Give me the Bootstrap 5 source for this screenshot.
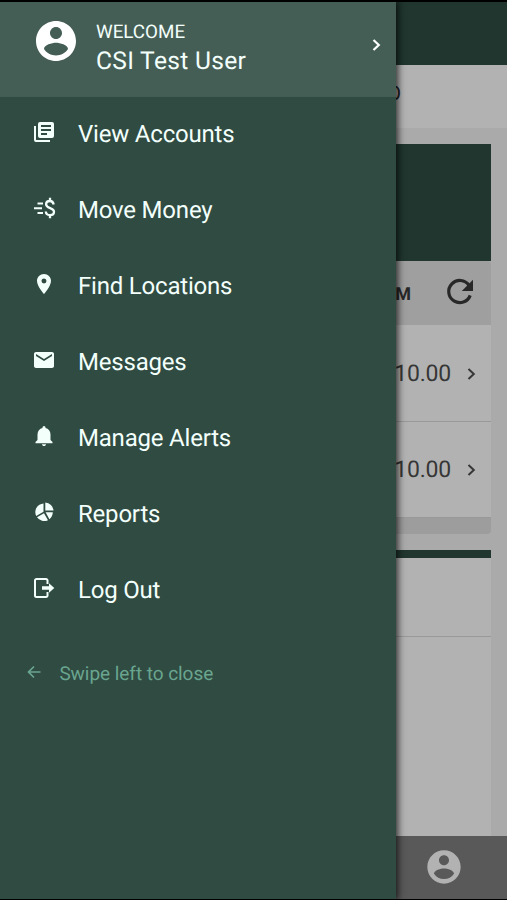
<!DOCTYPE html>
<html lang="en">
<head>
<meta charset="utf-8">
<meta name="viewport" content="width=device-width, initial-scale=1">
<title>Menu</title>
<link href="https://cdn.jsdelivr.net/npm/bootstrap@5.3.0/dist/css/bootstrap.min.css" rel="stylesheet">
<style>
body{font-family:Roboto,"Liberation Sans",sans-serif;background:#000;line-height:1;text-rendering:geometricPrecision}
.app{height:900px;padding:2px 0 1px;background:#000}
.page-area{background:#aaa}
.topbar{height:63px;background:#20362f}
.tabstrip{height:63px;background:#b2b2b2;padding:0 106px 7px 0;font-size:20px;color:#222}
.panel-head{height:117px;background:#20362f}
.panel-bar{height:64px;background:#9f9f9f;color:#282828;padding-right:14px;border-radius:0 4px 0 0}
.panel-bar b{font-size:18px;margin-right:34px;padding-top:3px}
.panel-bar svg{margin-top:-2px}
.amount-row{height:96px;background:#b2b2b2;color:#363636;font-size:23px;letter-spacing:-.2px;border-bottom:1px solid #999;padding:0 15px 0 0}
.amount-row svg{margin-left:16px}
.panel-foot{height:16px;background:#9d9d9d;border-radius:0 0 4px 4px}
.stack{padding-top:1px;background:#b2b2b2}
.accent{height:8px;background:#20362f;margin-top:16px}
.blank-row{height:79px;background:#b2b2b2;border-bottom:1px solid #999}
.blank-fill{background:#b2b2b2}
.bottombar{height:63px;background:#595959;padding:0 43px 1px 0}
.drawer{top:2px;left:0;width:396.4px;height:897px;background:#2f4b42;color:#f3fffb;box-shadow:1px 0 7px 1px rgba(0,0,0,.75)}
.profile{height:95px;background:#455e55;padding:19px 11.400px 0 32px}
.avatar{margin-top:-4px}
.who{margin-left:16px}
.hello{font-size:18.8px;line-height:22px}
.name{font-size:24.6px;line-height:28px;padding-top:5px;letter-spacing:.3px}
.entry{height:76px;padding:0 0 2px 32.4px;font-size:24px;letter-spacing:-.2px;color:#f3fffb}
.entry svg{margin-right:21.6px;margin-top:-4px}
.swipe{padding:35px 0 0 26.4px;color:#6aa58f;font-size:19px;letter-spacing:-.05px}
.swipe svg{margin-right:17px;margin-top:-3px}
</style>
</head>
<body>
<div class="app position-relative overflow-hidden">
  <div class="page-area d-flex flex-column h-100">
    <header class="topbar"></header>
    <div class="tabstrip d-flex align-items-center justify-content-end">O</div>
    <main class="flex-grow-1 d-flex flex-column px-3 pt-3">
      <div class="panel-head"></div>
      <div class="panel-bar d-flex align-items-center justify-content-end"><b>M</b>
        <svg width="32" height="32" viewBox="0 0 24 24" fill="none"><path d="M18.900 14.500A8.300 8.300 0 1 1 18 7" stroke="#282828" stroke-width="2.400"/><path d="M21 2.800v8.400h-8.400z" fill="#282828"/></svg>
      </div>
      <div class="stack">
      <div class="amount-row d-flex align-items-center justify-content-end">$10.00
        <svg width="9" height="14" viewBox="0 0 9 14" fill="none" stroke="#363636" stroke-width="2"><path d="M1.500 2 6.800 7 1.500 12"/></svg></div>
      <div class="amount-row d-flex align-items-center justify-content-end">$10.00
        <svg width="9" height="14" viewBox="0 0 9 14" fill="none" stroke="#363636" stroke-width="2"><path d="M1.500 2 6.800 7 1.500 12"/></svg></div>
      </div>
      <div class="panel-foot"></div>
      <div class="accent"></div>
      <div class="blank-row"></div>
      <div class="blank-fill flex-grow-1"></div>
    </main>
    <footer class="bottombar d-flex align-items-center justify-content-end">
      <svg width="40" height="40" viewBox="0 0 24 24" fill="#b2b2b2"><path d="M12 2C6.480 2 2 6.480 2 12s4.480 10 10 10 10-4.480 10-10S17.520 2 12 2zm0 3c1.660 0 3 1.340 3 3s-1.340 3-3 3-3-1.340-3-3 1.340-3 3-3zm0 14.200c-2.500 0-4.710-1.280-6-3.220.030-1.990 4-3.080 6-3.080 1.990 0 5.970 1.090 6 3.080-1.290 1.940-3.500 3.220-6 3.220z"/></svg>
    </footer>
  </div>

  <nav class="drawer position-absolute">
    <div class="profile d-flex align-items-start">
      <svg class="avatar" width="48" height="48" viewBox="0 0 24 24" fill="#fff"><path d="M12 2C6.480 2 2 6.480 2 12s4.480 10 10 10 10-4.480 10-10S17.520 2 12 2zm0 3c1.660 0 3 1.340 3 3s-1.340 3-3 3-3-1.340-3-3 1.340-3 3-3zm0 14.200c-2.500 0-4.710-1.280-6-3.220.030-1.990 4-3.080 6-3.080 1.990 0 5.970 1.090 6 3.080-1.290 1.940-3.500 3.220-6 3.220z"/></svg>
      <div class="who flex-grow-1"><div class="hello">WELCOME</div><div class="name">CSI Test User</div></div>
      <svg class="me-1 mt-3" width="9" height="16" viewBox="0 0 9 16" fill="none" stroke="#fff" stroke-width="2.200"><path d="M1.500 3 6.800 8 1.500 13"/></svg>
    </div>
    <a class="entry d-flex align-items-center text-decoration-none" href="#"><svg width="24" height="24" viewBox="0 0 24 24" fill="currentColor"><path d="M4 6H2v14a2 2 0 0 0 2 2h14v-2H4z"/><path fill-rule="evenodd" d="M8 2h12a2 2 0 0 1 2 2v12a2 2 0 0 1-2 2H8a2 2 0 0 1-2-2V4a2 2 0 0 1 2-2zm1 3v2h10V5zm0 4v2h10V9zm0 4v2h6v-2z"/></svg>View Accounts</a>
    <a class="entry d-flex align-items-center text-decoration-none" href="#"><svg width="24" height="24" viewBox="0 0 24 24" fill="none" stroke="currentColor" stroke-width="2"><path d="M5.500 7.500h5.500M2 12.200h8M5.500 17h5.500"/><path stroke-width="2.300" d="M21.700 8.500C21.200 6.300 19.900 5 18 5c-2.300 0-3.900 1.300-3.900 3.300 0 4.600 7.900 2.900 7.900 7.400 0 2.200-1.700 3.400-4 3.400-2.400 0-4-1.200-4.200-3.600M18 1.700v3.300M18 19v3.300"/></svg>Move Money</a>
    <a class="entry d-flex align-items-center text-decoration-none" href="#"><svg width="24" height="24" viewBox="0 0 24 24" fill="currentColor"><path d="M12 2C8.130 2 5 5.130 5 9c0 5.250 7 13 7 13s7-7.750 7-13c0-3.870-3.130-7-7-7zm0 9.500a2.500 2.500 0 0 1 0-5 2.500 2.500 0 0 1 0 5z"/></svg>Find Locations</a>
    <a class="entry d-flex align-items-center text-decoration-none" href="#"><svg width="24" height="24" viewBox="0 0 24 24" fill="currentColor"><path d="M20 4H4c-1.100 0-1.990.900-1.990 2L2 18c0 1.100.900 2 2 2h16c1.100 0 2-.900 2-2V6c0-1.100-.900-2-2-2zm0 4-8 5-8-5V6l8 5 8-5z"/></svg>Messages</a>
    <a class="entry d-flex align-items-center text-decoration-none" href="#"><svg width="24" height="24" viewBox="0 0 24 24" fill="currentColor"><path d="M12 22c1.100 0 2-.700 2-1.800h-4c0 1.100.900 1.800 2 1.800zM18.500 16v-5.500c0-3.100-2-5.800-5-6.500v-.500a1.500 1.500 0 0 0-3 0V4c-3 .700-5 3.400-5 6.500V16l-2 2v1.200h17V18z"/></svg>Manage Alerts</a>
    <a class="entry d-flex align-items-center text-decoration-none" href="#"><svg width="24" height="24" viewBox="0 0 24 24" fill="currentColor"><path d="M13.300 2.500a8.500 8.500 0 0 1 8.200 8h-8.200zM11.500 3.500v8.300L4.200 16A8.700 8.700 0 0 1 11.500 3.500zM5 17.300l7-4.100 4 7A8.700 8.700 0 0 1 5 17.300zM13.600 12.200h7.200a8.700 8.700 0 0 1-3.400 7z"/></svg>Reports</a>
    <a class="entry d-flex align-items-center text-decoration-none" href="#"><svg width="24" height="24" viewBox="0 0 24 24" fill="none" stroke="currentColor" stroke-width="2"><path d="M15.500 8V4.500a1.500 1.500 0 0 0-1.500-1.500H4.500A1.500 1.500 0 0 0 3 4.500v15A1.500 1.500 0 0 0 4.500 21H14a1.500 1.500 0 0 0 1.500-1.500V16"/><path stroke="none" fill="currentColor" d="M10 10.300h7V7.300L22.300 12 17 16.700v-3h-7z"/></svg>Log Out</a>
    <div class="swipe d-flex align-items-center"><svg width="16" height="16" viewBox="0 0 16 16" fill="none" stroke="currentColor" stroke-width="1.700"><path d="M14.500 8H3M8 2.500 2.500 8 8 13.500"/></svg>Swipe left to close</div>
  </nav>
</div>
<script src="https://cdn.jsdelivr.net/npm/bootstrap@5.3.0/dist/js/bootstrap.bundle.min.js"></script>
</body>
</html>
